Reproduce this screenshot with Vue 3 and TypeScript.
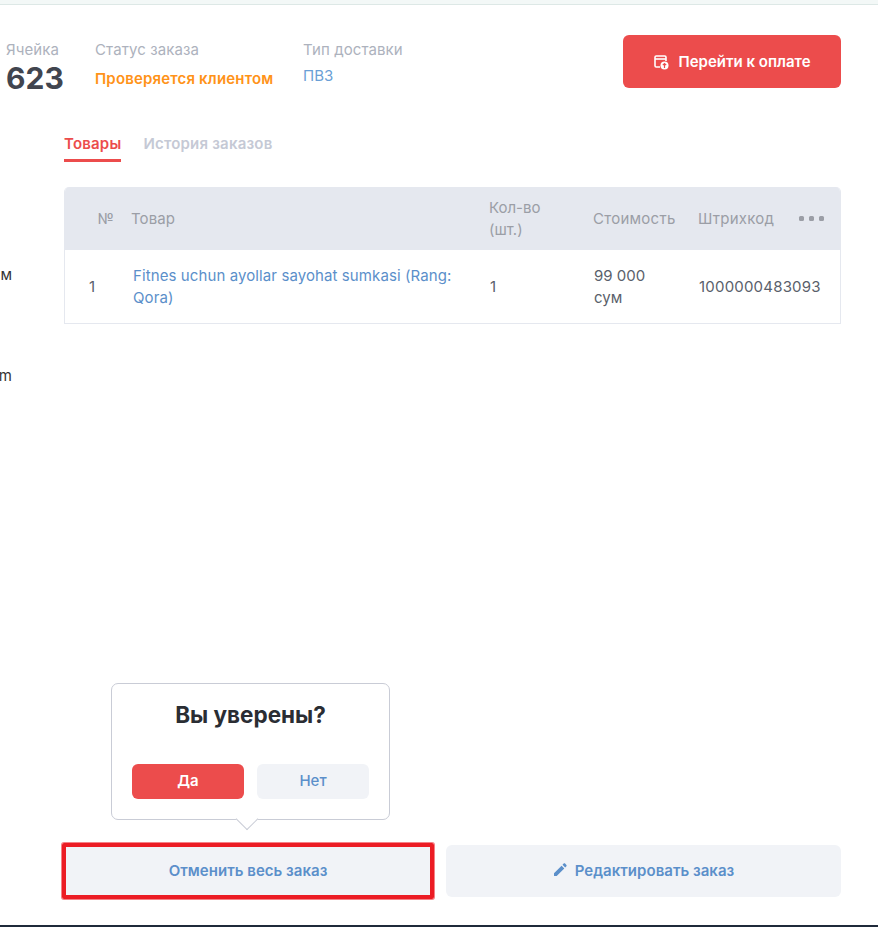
<script setup lang="ts">
const columns = ['Товар']
</script>

<template>
  <div class="page">
    <div class="top-strip"></div>
    <div class="shell">
      <main class="main">
        <header class="head">
          <div class="cell">
            <div class="label">Ячейка</div>
            <div class="big">623</div>
          </div>
          <div class="status">
            <div class="label">Статус заказа</div>
            <div class="orange">Проверяется клиентом</div>
          </div>
          <div class="delivery">
            <div class="label">Тип доставки</div>
            <div class="link-val">ПВЗ</div>
          </div>
          <button class="pay">
            <svg width="16" height="16" viewBox="0 0 16 16" fill="none">
              <path d="M7 13H3.2C2.5 13 2 12.5 2 11.8V3.2C2 2.5 2.5 2 3.2 2H11.8C12.5 2 13 2.500 13 3.200V7" stroke="#fff" stroke-width="1.6" />
              <path d="M2 5H13" stroke="#fff" stroke-width="1.6" />
              <circle cx="11.500" cy="11.500" r="4" fill="#fff" />
              <path d="M11.500 14V9.500M9.800 11.200L11.500 9.500L13.200 11.200" stroke="#ec4c4c" stroke-width="1.200" fill="none" />
            </svg>
            <span>Перейти к оплате</span>
          </button>
        </header>

        <div class="body">
          <div class="clipped">
            <span class="frag-a">м</span>
            <span class="frag-b">m</span>
          </div>
          <div class="content">
            <nav class="tabs">
              <span class="tab active">Товары</span>
              <span class="tab">История заказов</span>
            </nav>
            <div class="table">
              <div class="row thead">
                <div class="c-n">№</div>
                <div class="c-name">{{ columns[0] }}</div>
                <div class="c-qty">Кол-во (шт.)</div>
                <div class="c-price">Стоимость</div>
                <div class="c-code">Штрихкод</div>
                <div class="c-more"><i></i><i></i><i></i></div>
              </div>
              <div class="row tbody">
                <div class="c-n">1</div>
                <div class="c-name prod">Fitnes uchun ayollar sayohat sumkasi (Rang: Qora)</div>
                <div class="c-qty">1</div>
                <div class="c-price">99 000 сум</div>
                <div class="c-code">1000000483093</div>
              </div>
            </div>
          </div>
        </div>

        <footer class="actions">
          <div class="cancel-wrap">
            <div class="popover">
              <div class="pop-title">Вы уверены?</div>
              <div class="pop-btns">
                <button class="yes">Да</button>
                <button class="no">Нет</button>
              </div>
              <span class="tail"></span>
            </div>
            <button class="act">Отменить весь заказ</button>
            <span class="mark"></span>
          </div>
          <button class="act edit">
            <svg width="14" height="14" viewBox="0 0 14 14" fill="#5b8fca">
              <path d="M1 13V10.300L8.600 2.700L11.300 5.400L3.700 13H1ZM9.500 1.800L10.700 0.600C11.100 0.200 11.700 0.200 12.100 0.600L13.400 1.900C13.800 2.300 13.800 2.900 13.400 3.300L12.200 4.500L9.500 1.800Z" />
            </svg>
            <span>Редактировать заказ</span>
          </button>
        </footer>
      </main>
      <div class="side"></div>
    </div>
    <div class="bottom-strip"></div>
  </div>
</template>

<style>
html, body { margin: 0; background: #fff; }
</style>

<style scoped>
* { box-sizing: border-box; }
.page {
  width: 878px;
  height: 927px;
  display: flex;
  flex-direction: column;
  overflow: hidden;
  font-family: Inter, "Noto Sans", sans-serif;
  background: #fff;
}
.top-strip {
  height: 5px;
  background: #f3f8f7;
  border-bottom: 1px solid #dde8e6;
}
.shell { flex: 1; display: flex; min-height: 0; }
.main {
  flex: 1;
  display: flex;
  flex-direction: column;
  padding: 30px 37px 28px 6px;
  background: #fff;
}
.side { width: 7px; background: #f3f4f6; }
.bottom-strip { height: 2px; background: #1f2a3a; }
.head { display: flex; align-items: flex-start; height: 53px; }
.label { font-size: 15px; line-height: 20px; color: #adb2bd; margin-top: 5px; letter-spacing: 0.1px; }
.cell { width: 89px; }
.big { font-size: 30px; line-height: 36px; font-weight: 700; color: #41454f; margin-top: 0; }
.status { width: 208px; }
.orange { font-size: 15px; line-height: 20px; font-weight: 600; color: #ff9318; margin-top: 9px; letter-spacing: 0.17px; }
.delivery { flex: 1; }
.link-val { font-size: 15px; line-height: 20px; color: #6a9fd6; margin-top: 6px; }
.pay {
  width: 218px;
  height: 53px;
  display: flex;
  align-items: center;
  justify-content: center;
  gap: 9px;
  border: 0;
  border-radius: 6px;
  background: #ec4c4c;
  color: #fff;
  font: 600 15px Inter, sans-serif;
}
.body { display: flex; height: 236px; margin-top: 41px; margin-left: -6px; }
.clipped { width: 64px; position: relative; font-size: 15px; color: #333; flex: none; }
.frag-a { position: absolute; right: 52px; top: 136px; line-height: 20px; }
.frag-b { position: absolute; right: 52px; top: 237px; line-height: 20px; }
.content { flex: 1; }
.tabs { display: flex; gap: 22px; height: 33px; }
.tab {
  font-size: 15px;
  line-height: 20px;
  font-weight: 600;
  letter-spacing: 0.2px;
  color: #c5c9d5;
  padding-top: 5px;
  height: 33px;
}
.tab.active { color: #ec4c4c; border-bottom: 3px solid #ec4c4c; }
.table {
  margin-top: 25px;
  border: 1px solid #e5e8ef;
  border-top: 0;
  border-radius: 5px 5px 0 0;
  overflow: hidden;
  width: 777px;
}
.row {
  display: grid;
  grid-template-columns: 68px 357px 104px 105px 100px 1fr;
  align-items: center;
  font-size: 15px;
  line-height: 22px;
}
.thead { height: 63px; background: #e5e8ef; color: #9b9ea6; margin: 0 -1px; }
.tbody { height: 73px; color: #5a5f6b; }
.c-n { text-align: right; padding-right: 18px; }
.tbody .c-n { text-align: left; padding: 0 0 0 24px; }
.c-name { padding-right: 20px; letter-spacing: 0.1px; }
.thead .c-name { margin-left: -1px; }
.prod { color: #5b8fca; }
.c-qty { padding-right: 30px; }
.c-price { padding-right: 10px; }
.thead .c-price, .thead .c-code { letter-spacing: 0.25px; }
.tbody .c-price { padding-right: 24px; }
.tbody .c-code { letter-spacing: 0.2px; white-space: nowrap; }
.c-more { display: flex; gap: 5px; padding-left: 1px; }
.c-more i { width: 5px; height: 5px; border-radius: 1.5px; background: #9b9ea6; }
.actions { margin-top: auto; display: flex; gap: 14px; margin-left: 58px; }
.cancel-wrap { position: relative; width: 368px; flex: none; }
.act {
  width: 100%;
  height: 52px;
  border: 0;
  border-radius: 6px;
  padding: 0 0 2px;
  background: #f1f3f7;
  color: #5b8fca;
  font: 600 15px Inter, sans-serif;
  letter-spacing: 0.03px;
  display: flex;
  align-items: center;
  justify-content: center;
  gap: 8px;
}
.edit { flex: 1; width: auto; }
.mark {
  position: absolute;
  left: -2px; right: -2px; top: -2px; bottom: -2px;
  border: 4px solid #ec1c24;
  border-radius: 2px;
  box-shadow: 0 0 0 1px rgba(236, 28, 36, 0.55);
  pointer-events: none;
}
.popover {
  position: absolute;
  left: 47px;
  bottom: 77px;
  width: 279px;
  height: 137px;
  background: #fff;
  border: 1px solid #c9ccd6;
  border-radius: 7px;
  padding: 0 20px;
}
.pop-title { text-align: center; font-size: 22.5px; line-height: 30px; font-weight: 700; color: #2a2d33; margin-top: 16px; }
.pop-btns { display: flex; gap: 13px; margin-top: 34px; }
.pop-btns button {
  width: 112px;
  height: 35px;
  border: 0;
  border-radius: 6px;
  padding: 0 0 2px;
  font: 500 15px Inter, sans-serif;
}
.pop-btns .yes { background: #ec4c4c; color: #fff; font-weight: 600; }
.no { background: #f1f3f7; color: #5b8fca; }
.tail {
  position: absolute;
  left: 127px;
  bottom: -8px;
  width: 16px;
  height: 16px;
  background: #fff;
  border-right: 1px solid #c9ccd6;
  border-bottom: 1px solid #c9ccd6;
  transform: rotate(45deg);
}
</style>
